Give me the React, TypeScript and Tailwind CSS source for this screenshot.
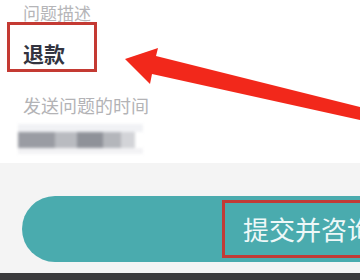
const Arrow = () => (
  <svg
    className="absolute left-0 top-0 pointer-events-none"
    width="360"
    height="280"
    viewBox="0 0 360 280"
  >
    <polygon
      points="125,59 158,48 156,56 360,107 360,120 152,74 150,84"
      fill="#f2281b"
    />
  </svg>
);

const App = () => {
  return (
    <div
      className="relative w-[360px] h-[280px] overflow-hidden bg-white flex flex-col"
      style={{ fontFamily: '"Noto Sans CJK SC", "Noto Sans", sans-serif' }}
    >
      <section className="h-[163px] bg-white">
        <p className="ml-[23px] mt-[3px] text-[17px] leading-[20px] text-[#b5b5b8]">问题描述</p>
        <div className="ml-[7px] mt-[-1px] w-[90px] h-[50px] border-[3px] border-[#c43a33] pl-[13px] pt-[16px]">
          <p className="text-[21px] leading-[24px] font-bold text-[#33343f]">退款</p>
        </div>
        <p className="ml-[23px] mt-[22px] text-[18px] leading-[22px] text-[#b3b3b6]">发送问题的时间</p>
        <div className="ml-[18px] mt-[8px] w-[125px] blur-[1.5px]">
          <div className="h-[8px] bg-[#f1f2f5]" />
          <div className="flex h-[16px]">
            <div className="w-[37px] bg-[#9a9ca3]" />
            <div className="w-[22px] bg-[#b9bbc0]" />
            <div className="w-[26px] bg-[#8f9299]" />
            <div className="w-[18px] bg-[#b4b6bb]" />
            <div className="w-[14px] bg-[#d3d4d8]" />
          </div>
          <div className="h-[6px] bg-[#f3f3f5]" />
        </div>
      </section>

      <section className="flex-1 bg-[#f4f4f4] pt-[33px] pl-[22px]">
        <div className="w-[420px] h-[66px] rounded-l-full bg-[#4aabae] pt-[4px] pl-[200px]">
          <div className="h-[58px] border-[3px] border-r-0 border-[#c23a36] flex items-center pl-[18px]">
            <span className="text-[26px] leading-[30px] text-[#eef8f8] whitespace-nowrap">提交并咨询</span>
          </div>
        </div>
      </section>

      <div className="h-[7px] bg-[#3b3b3d]" />

      <Arrow />
    </div>
  );
};

export default App;
